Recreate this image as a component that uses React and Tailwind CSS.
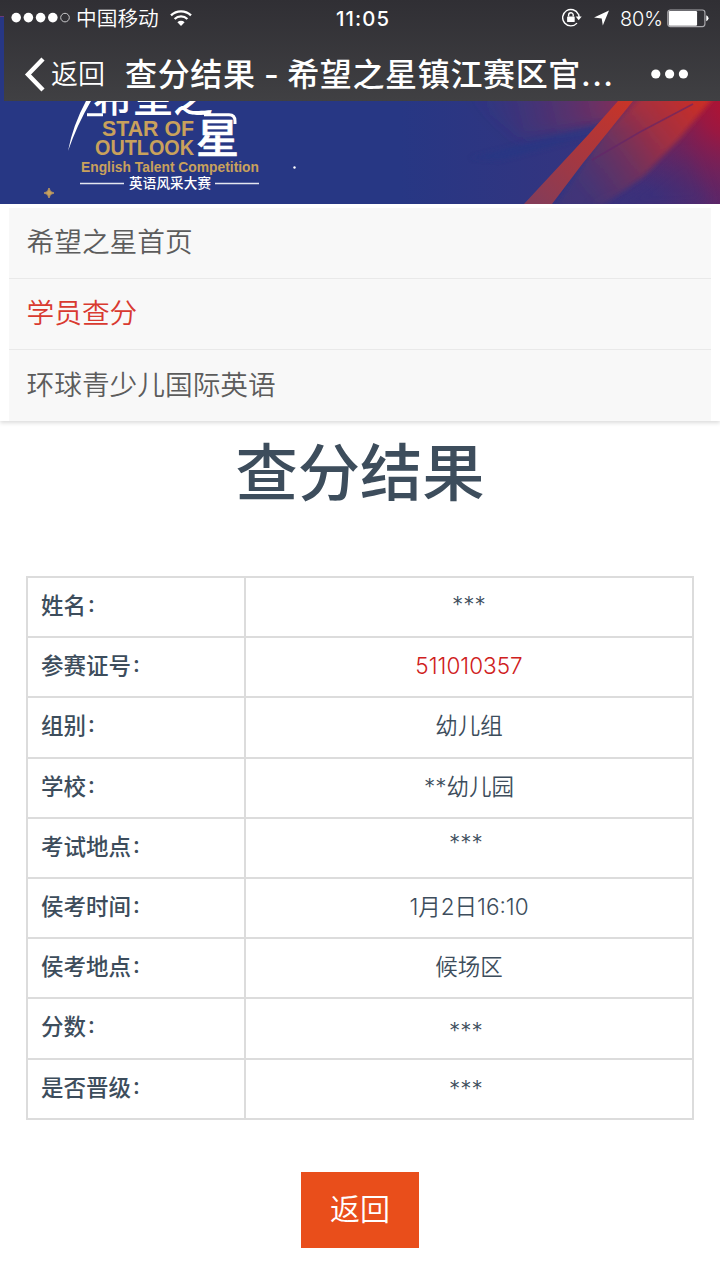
import React from "react";

const menu = [
  { label: "希望之星首页" },
  { label: "学员查分", active: true },
  { label: "环球青少儿国际英语" },
];

const rows = [
  { label: "姓名:", value: "***", shift: "-translate-y-px" },
  { label: "参赛证号:", value: "511010357", red: true },
  { label: "组别:", value: "幼儿组" },
  { label: "学校:", value: "**幼儿园" },
  { label: "考试地点:", value: "***", shift: "-translate-y-1 -translate-x-[3px]" },
  { label: "侯考时间:", value: "1月2日16:10" },
  { label: "侯考地点:", value: "候场区" },
  { label: "分数:", value: "***", shift: "translate-y-1 -translate-x-[3px]" },
  { label: "是否晋级:", value: "***", shift: "translate-y-px -translate-x-[3px]" },
];

function StatusBar() {
  return (
    <div className="flex h-9 items-center text-[20px] leading-9">
      <svg className="ml-[11px] shrink-0" width="60" height="12" viewBox="0 0 60 12">
        {[5.2, 17.4, 29.6, 41.8].map((cx) => (
          <circle key={cx} cx={cx} cy="5.6" r="4.8" fill="#fff" />
        ))}
        <circle cx="54" cy="5.6" r="4.3" fill="none" stroke="#c9c9cb" strokeWidth="1" />
      </svg>
      <span className="ml-[5px] w-[84px] translate-y-px whitespace-nowrap text-[20.7px] font-[350]">中国移动</span>
      <svg className="ml-[10px] shrink-0" width="22" height="17" viewBox="0 0 22 17" fill="none" stroke="#fff">
        <path d="M1 5.4 A14.5 14.5 0 0 1 21 5.4" strokeWidth="2.3" />
        <path d="M4.6 9 A9.3 9.3 0 0 1 17.4 9" strokeWidth="2.2" />
        <path d="M11 16 L7.4 12.3 A5.2 5.2 0 0 1 14.6 12.3 Z" fill="#fff" stroke="none" />
      </svg>
      <span className="ml-[144px] w-[55px] translate-y-px whitespace-nowrap font-['Inter'] text-[20.3px] font-medium tracking-[1.1px]">
        11:05
      </span>
      <svg className="ml-[171px] shrink-0" width="20" height="20" viewBox="0 0 20 20" fill="none" stroke="#fff">
        <path d="M16.3 6.2 A8.2 8.2 0 1 0 15 15.1" strokeWidth="1.4" />
        <path d="M13.7 8.6 h6 l-3 3.6 Z" fill="#fff" stroke="none" />
        <path d="M16.5 6 l0.7 3" strokeWidth="1.4" />
        <rect x="5.1" y="8.4" width="7.6" height="5.6" rx="0.6" fill="#fff" stroke="none" />
        <path d="M6.6 8.6 V7 a2.3 2.3 0 0 1 4.6 0 v1.6" strokeWidth="1.4" />
      </svg>
      <svg className="ml-[12px] shrink-0" width="15" height="16" viewBox="0 0 15 16">
        <path d="M15 0.5 L8.8 15.5 L7.7 8.5 L0 7.6 Z" fill="#fff" />
      </svg>
      <span className="ml-[11px] w-[44px] translate-y-px whitespace-nowrap font-['Inter'] text-[20px] font-[350] tracking-[-0.2px]">
        80%
      </span>
      <svg className="ml-[3px] shrink-0" width="42" height="19" viewBox="0 0 43 19">
        <rect x="0.8" y="0.8" width="38" height="17" rx="2.6" fill="none" stroke="#aaa9ad" strokeWidth="1.2" />
        <rect x="1.8" y="1.8" width="29" height="15" rx="1.2" fill="#fff" />
        <path d="M40.2 6.3 q2.3 1 2.3 3 t-2.3 3 Z" fill="#fff" />
      </svg>
    </div>
  );
}

function TitleBar() {
  return (
    <div className="flex h-[65px] items-center pb-px pt-3">
      <svg className="ml-[24px] shrink-0" width="22" height="35" viewBox="0 0 22 35">
        <path d="M19 2 L4 17.5 L19 33" fill="none" stroke="#fff" strokeWidth="4.4" />
      </svg>
      <span className="ml-[5px] w-[56px] translate-y-px whitespace-nowrap text-[27px] font-[350]">返回</span>
      <h1 className="ml-[18px] w-[500px] translate-y-px whitespace-nowrap text-[32px] font-medium tracking-[0.65px]">
        查分结果<span className="tracking-[-0.1px]"> - </span>希望之星镇江赛区官
        <span className="font-['Inter'] tracking-[1.4px]">...</span>
      </h1>
      <svg className="ml-[26px] shrink-0" width="38" height="10" viewBox="0 0 38 10" fill="#fff">
        <circle cx="4.8" cy="5" r="4.6" />
        <circle cx="18.6" cy="5" r="4.6" />
        <circle cx="32.4" cy="5" r="4.6" />
      </svg>
    </div>
  );
}

function Banner() {
  return (
    <svg className="block" width="720" height="103" viewBox="0 101 720 103">
      <defs>
        <linearGradient id="base" x1="400" y1="0" x2="720" y2="0" gradientUnits="userSpaceOnUse">
          <stop offset="0" stopColor="#273784" />
          <stop offset="0.6" stopColor="#35347f" />
          <stop offset="1" stopColor="#58286c" />
        </linearGradient>
        <radialGradient id="crimson" cx="735" cy="100" r="125" gradientUnits="userSpaceOnUse">
          <stop offset="0" stopColor="#b9102c" />
          <stop offset="0.3" stopColor="#a1163d" stopOpacity="0.9" />
          <stop offset="1" stopColor="#64245f" stopOpacity="0" />
        </radialGradient>
        <linearGradient id="haze" x1="660" y1="100" x2="480" y2="140" gradientUnits="userSpaceOnUse">
          <stop offset="0" stopColor="#b32b40" stopOpacity="0.85" />
          <stop offset="1" stopColor="#5d3068" stopOpacity="0" />
        </linearGradient>
        <linearGradient id="fan" x1="705" y1="101" x2="585" y2="200" gradientUnits="userSpaceOnUse">
          <stop offset="0" stopColor="#cb2d25" />
          <stop offset="0.35" stopColor="#a8303e" stopOpacity="0.9" />
          <stop offset="1" stopColor="#583569" stopOpacity="0.35" />
        </linearGradient>
        <linearGradient id="beam" x1="625" y1="101" x2="538" y2="204" gradientUnits="userSpaceOnUse">
          <stop offset="0" stopColor="#c73428" />
          <stop offset="0.5" stopColor="#a8373e" />
          <stop offset="1" stopColor="#853c58" />
        </linearGradient>
        <filter id="soft" x="-20%" y="-20%" width="140%" height="140%">
          <feGaussianBlur stdDeviation="2.5" />
        </filter>
        <filter id="softer" x="-30%" y="-60%" width="160%" height="220%">
          <feGaussianBlur stdDeviation="7" />
        </filter>
      </defs>

      <rect y="101" width="720" height="103" fill="url(#base)" />
      <path d="M450 84 L720 84 L610 124 L520 138 Z" fill="url(#haze)" filter="url(#softer)" />
      <path d="M470 158 L600 124 L640 110 L590 136 L500 160 Z" fill="#243785" opacity="0.5" filter="url(#soft)" />
      <path d="M590 210 L640 190 L690 150 L710 204 Z" fill="#33307e" opacity="0.5" filter="url(#softer)" />
      <rect x="600" y="101" width="120" height="103" fill="url(#crimson)" />
      <path d="M714 97 L642 97 L606 130 L556 206 L602 206 L644 176 L680 138 Z" fill="url(#fan)" filter="url(#soft)" />
      <path d="M693 104 L640 132 L592 160" fill="none" stroke="#642568" strokeWidth="1.6" opacity="0.65" />
      <path d="M618 101 L633 101 L583 163 L552 204 L524 204 L588 135 Z" fill="url(#beam)" />

      {/* logo */}
      <path d="M86 101 Q73 125 68 151 Q77 125 91 101 Z" fill="#fff" />
      <g fill="#fff" fontFamily="Noto Sans CJK SC, sans-serif" fontWeight="500">
        <text x="93" y="112" fontSize="43" textLength="120" lengthAdjust="spacingAndGlyphs">希望之</text>
        <text x="196" y="152.5" fontSize="41" stroke="#fff" strokeWidth="0.6" textLength="43" lengthAdjust="spacingAndGlyphs">星</text>
      </g>
      <path d="M87 114.8 H103 M204 114.8 H229 Q235 115 235 121 V124" fill="none" stroke="#fff" strokeWidth="3" />
      <g fill="#c9a15c" fontFamily="Liberation Sans, sans-serif" fontWeight="700">
        <text x="102" y="136.3" fontSize="22" textLength="92" lengthAdjust="spacingAndGlyphs">STAR OF</text>
        <text x="95" y="155" fontSize="22" textLength="99" lengthAdjust="spacingAndGlyphs">OUTLOOK</text>
      </g>
      <text x="81" y="172" fontSize="14.5" fontFamily="Liberation Sans, sans-serif" fontWeight="700" fill="#c9a15c" textLength="178" lengthAdjust="spacingAndGlyphs">
        English Talent Competition
      </text>
      <text x="129" y="188" fontSize="13.5" fontFamily="Noto Sans CJK SC, sans-serif" fontWeight="500" fill="#fff" textLength="82">
        英语风采大赛
      </text>
      <path d="M80 183.5 H124 M215 183.5 H259" stroke="#e4e6f0" strokeWidth="1.3" />
      <path d="M49 188 Q49.6 192.4 54 193 Q49.6 193.6 49 198 Q48.4 193.6 44 193 Q48.4 192.4 49 188 Z" fill="#c9a15c" stroke="#c9a15c" strokeWidth="0.8" />
      <circle cx="294.5" cy="167.5" r="1.2" fill="#fff" />
    </svg>
  );
}

function Menu() {
  return (
    <nav className="bg-white px-[9px] pt-1 shadow-[0_2px_4px_rgba(0,0,0,0.14)]">
      {menu.map((item) => (
        <div
          key={item.label}
          className={`h-[71px] border-b border-[#e9e9e9] bg-[#f8f8f8] pl-[17.5px] text-[27.7px] font-[350] leading-[68px] last:border-b-0 last:pt-px ${
            item.active ? "text-[#d93a30]" : "text-[#5c5c5c]"
          }`}
        >
          {item.label}
        </div>
      ))}
    </nav>
  );
}

export default function App() {
  return (
    <div className="h-[1280px] overflow-hidden bg-white font-['Inter','Noto_Sans_CJK_SC',sans-serif]">
      <header className="relative h-[101px] bg-linear-to-b from-[#302f34] to-[#404043] text-white">
        <div className="absolute bottom-0 left-0 top-4 w-1 border-t border-[#6b3a78] bg-[#273784]"></div>
        <StatusBar />
        <TitleBar />
      </header>
      <Banner />
      <Menu />

      <h2 className="mt-[13px] text-center text-[62.3px] font-medium leading-[80px] text-[#3d4d5c]">查分结果</h2>

      <table className="ml-[26px] mt-[62px] w-[668px] table-fixed border-collapse text-[22.5px] text-[#3d4d5c]">
        <tbody>
          {rows.map((row) => (
            <tr key={row.label} className="h-[60.2px]">
              <td className="w-[218px] border-2 border-[#dcdcdc] pb-0.5 pl-[13px] font-medium leading-8">
                {row.label.slice(0, -1)}
                <span className="relative -top-0.5 ml-[2px]">:</span>
              </td>
              <td
                className={`border-2 border-[#dcdcdc] pb-0.5 text-center font-[350] leading-8 ${
                  row.red ? "text-[#cf2020]" : ""
                }`}
              >
                <span className={`inline-block ${row.shift || ""}`}>{row.value}</span>
              </td>
            </tr>
          ))}
        </tbody>
      </table>

      <div className="mt-[52px] flex justify-center">
        <button className="h-[76px] w-[118px] bg-[#e94e1b] text-[30px] font-[350] text-white">返回</button>
      </div>
    </div>
  );
}
